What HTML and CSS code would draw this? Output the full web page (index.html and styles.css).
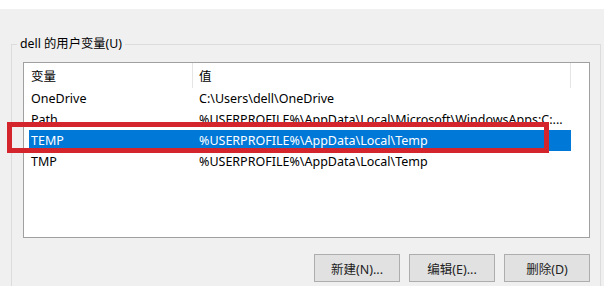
FILE: index.html
```html
<!DOCTYPE html>
<html>
<head>
<meta charset="utf-8">
<title>环境变量</title>
<link rel="stylesheet" href="styles.css">
</head>
<body>
	<div class="topbar"></div>
	<fieldset class="group">
		<legend>dell 的用户变量(U)</legend>
		<div class="list">
			<div class="list_head">
				<div class="col name">变量</div>
				<div class="col value">值</div>
			</div>
			<div class="row">
				<div class="col name">OneDrive</div>
				<div class="col value">C:\Users\dell\OneDrive</div>
			</div>
			<div class="row">
				<div class="col name">Path</div>
				<div class="col value">%USERPROFILE%\AppData\Local\Microsoft\WindowsApps;C:...</div>
			</div>
			<div class="row selected">
				<div class="col name">TEMP</div>
				<div class="col value">%USERPROFILE%\AppData\Local\Temp</div>
			</div>
			<div class="row">
				<div class="col name">TMP</div>
				<div class="col value">%USERPROFILE%\AppData\Local\Temp</div>
			</div>
		</div>
		<div class="buttons">
			<button class="btn">新建(N)...</button>
			<button class="btn">编辑(E)...</button>
			<button class="btn">删除(D)</button>
		</div>
	</fieldset>
	<div class="mark"></div>
</body>
</html>
```

FILE: styles.css
```css
html, body{ margin: 0; padding: 0;}
body{
	width: 604px;
	height: 286px;
	overflow: hidden;
	background: #f0f0f0;
	font-family: "Noto Sans", "Noto Sans CJK SC", sans-serif;
	font-size: 12px;
	color: #000;
	position: relative;
}

.topbar{ height: 9px; background: #fff;}

.group{
	margin: 27px 3px 0 11px;
	padding: 0;
	border: 1px solid #dcdcdc;
	min-inline-size: 0;
}
.group legend{ margin-left: 5px; padding: 0 3px; line-height: 16px; font-size: 12.3px;}

.list{
	margin: 10px 10px 0 11px;
	height: 174px;
	background: #fff;
	border: 1px solid #a0a0a0;
	padding-left: 5px;
	font-size: 12.5px;
}
.list_head, .row{ display: grid; grid-template-columns: 163px 379px; width: 542px;}
.list_head{ height: 25px; line-height: 27px;}
.list_head .value{ border-left: 1px solid #e5e5e5; border-right: 1px solid #e5e5e5; padding-left: 6px;}
.row{ height: 21px; line-height: 21px;}
.col{ padding-left: 2px; white-space: nowrap; overflow: hidden; text-overflow: ellipsis;}
.row .value{ padding-left: 7px; padding-right: 4px;}
.row.selected{ background: #0078d7; color: #fff;}

.buttons{ display: flex; justify-content: flex-end; gap: 9px; margin: 16px 10px 10px 0;}
.btn{
	width: 86px;
	height: 28px;
	background: #e1e1e1;
	border: 1px solid #adadad;
	font-family: inherit;
	font-size: 12.5px;
	color: #222;
	padding: 0;
}

.mark{
	position: absolute;
	left: 7px;
	top: 122px;
	width: 532px;
	height: 21px;
	border: 5px solid #d3252b;
}
```
